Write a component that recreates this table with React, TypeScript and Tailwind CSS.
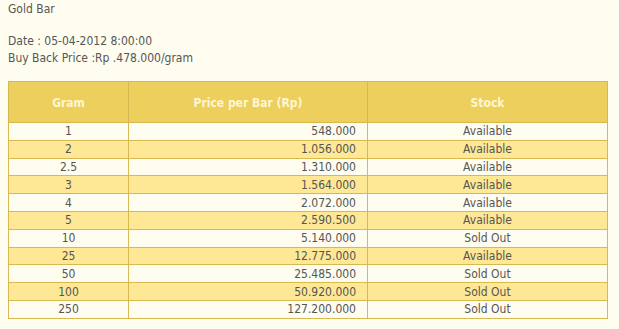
const rows = [
    { gram: "1", price: "548.000", stock: "Available" },
    { gram: "2", price: "1.056.000", stock: "Available" },
    { gram: "2.5", price: "1.310.000", stock: "Available" },
    { gram: "3", price: "1.564.000", stock: "Available" },
    { gram: "4", price: "2.072.000", stock: "Available" },
    { gram: "5", price: "2.590.500", stock: "Available" },
    { gram: "10", price: "5.140.000", stock: "Sold Out" },
    { gram: "25", price: "12.775.000", stock: "Available" },
    { gram: "50", price: "25.485.000", stock: "Sold Out" },
    { gram: "100", price: "50.920.000", stock: "Sold Out" },
    { gram: "250", price: "127.200.000", stock: "Sold Out" }
]

export default function App() {
    return (
        <div
            className="h-[329px] w-[619px] overflow-hidden bg-[#fffdf0] px-2 pt-[1px] text-[12px] text-[#555555]"
            style={{ fontFamily: "Tahoma, 'DejaVu Sans Condensed', 'DejaVu Sans', sans-serif" }}
        >
            <p className="leading-[17px]">Gold Bar</p>
            <p className="mt-[15px] leading-[17px]">Date : 05-04-2012 8:00:00</p>
            <p className="leading-[17px]">Buy Back Price :Rp .478.000/gram</p>
            <table className="mt-[14px] w-[600px] border-collapse border border-[#d8b850]">
                <thead>
                    <tr className="h-[41px] bg-[#edcf5e] text-[#fff6d0]">
                        <th className="w-[120px] border border-[#d8b850] pt-[2px] font-bold">Gram</th>
                        <th className="w-[239px] border border-[#d8b850] pt-[2px] font-bold">Price per Bar (Rp)</th>
                        <th className="border border-[#d8b850] pt-[2px] font-bold">Stock</th>
                    </tr>
                </thead>
                <tbody>
                    {rows.map((r, i) => (
                        <tr key={r.gram} className={`h-[17.8px] leading-[16px] ${i % 2 === 0 ? "bg-[#fffdf0]" : "bg-[#fee895]"}`}>
                            <td className="border border-[#d8b850] p-0 text-center">{r.gram}</td>
                            <td className="border border-[#d8b850] p-0 pr-[11px] text-right">{r.price}</td>
                            <td className="border border-[#d8b850] p-0 text-center">{r.stock}</td>
                        </tr>
                    ))}
                </tbody>
            </table>
        </div>
    )
}
